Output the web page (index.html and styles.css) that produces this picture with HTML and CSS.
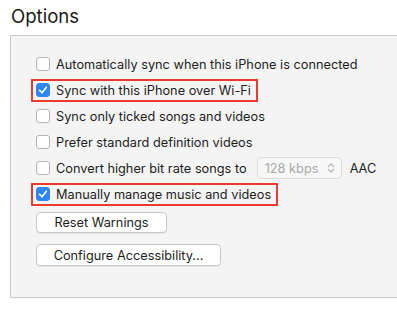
FILE: index.html
```html
<!DOCTYPE html>
<html lang="en">
<head>
    <meta charset="UTF-8">
    <title>Options</title>
    <link rel="stylesheet" href="styles.css">
</head>
<body>

    <h1 class="titulo">Options</h1>

    <div class="painel">
        <div class="linha">
            <label class="opcao"><span class="caixa"></span>Automatically sync when this iPhone is connected</label>
        </div>
        <div class="linha">
            <label class="opcao destaque"><span class="caixa marcada"><svg viewBox="0 0 14 14" width="14" height="14"><path d="M3.6 7.4 L6 9.8 L10.4 4.2" fill="none" stroke="#fff" stroke-width="1.6" stroke-linecap="round" stroke-linejoin="round"/></svg></span>Sync with this iPhone over Wi-Fi</label>
        </div>
        <div class="linha">
            <label class="opcao"><span class="caixa"></span>Sync only ticked songs and videos</label>
        </div>
        <div class="linha">
            <label class="opcao"><span class="caixa"></span>Prefer standard definition videos</label>
        </div>
        <div class="linha">
            <label class="opcao"><span class="caixa"></span>Convert higher bit rate songs to</label>
            <span class="seletor">128 kbps
                <svg class="setas" viewBox="0 0 8 12" width="8" height="12"><path d="M1.5 4.5 L4 2 L6.5 4.5 M1.5 7.5 L4 10 L6.5 7.5" fill="none" stroke="#b5b5b5" stroke-width="1.2" stroke-linecap="round" stroke-linejoin="round"/></svg>
            </span>
            <span class="sufixo">AAC</span>
        </div>
        <div class="linha">
            <label class="opcao destaque"><span class="caixa marcada"><svg viewBox="0 0 14 14" width="14" height="14"><path d="M3.6 7.4 L6 9.8 L10.4 4.2" fill="none" stroke="#fff" stroke-width="1.6" stroke-linecap="round" stroke-linejoin="round"/></svg></span>Manually manage music and videos</label>
        </div>

        <button class="botao botao-reset">Reset Warnings</button>
        <button class="botao botao-acessibilidade">Configure Accessibility...</button>
    </div>

</body>
</html>
```

FILE: styles.css
```css
* {
    margin: 0;
    padding: 0;
    box-sizing: border-box;
}

body {
    font-family: Inter, "Liberation Sans", Arial, sans-serif;
    font-size: 12.75px;
    color: #1e1e1e;
    background-color: #fff;
    overflow: hidden;
}

.titulo {
    font-size: 18.6px;
    font-weight: normal;
    color: #1a1a1a;
    padding: 5px 0 0 11px;
    height: 35px;
}

.painel {
    margin-left: 10px;
    height: 263px;
    background-color: #f4f4f4;
    border: 1px solid #c9c9c9;
    border-right: none;
    padding: 15px 0 0 25px;
}

.linha {
    height: 26px;
    display: flex;
    align-items: center;
}

.opcao {
    display: inline-flex;
    align-items: center;
    gap: 6px;
    height: 23px;
    white-space: nowrap;
}

.destaque {
    margin-left: -5px;
    padding: 0 5px 0 3px;
    border: 2px solid #ea3b2e;
}

.caixa {
    width: 14px;
    height: 14px;
    border: 1px solid #b4b4b4;
    border-radius: 3px;
    background-color: #fff;
    display: inline-block;
    flex-shrink: 0;
}

.caixa.marcada {
    border-color: #2f86f6;
    background-color: #2f86f6;
}

.caixa svg {
    display: block;
    margin: -1px;
}

.seletor {
    margin-left: 10px;
    width: 85px;
    height: 22px;
    border: 1px solid #dcdcdc;
    border-radius: 4px;
    background-color: #f7f7f7;
    color: #a9a9a9;
    display: flex;
    align-items: center;
    justify-content: space-between;
    padding: 0 6px 0 7px;
}

.sufixo {
    margin-left: 8px;
}

.botao {
    display: block;
    font-family: inherit;
    font-size: 12.75px;
    color: #1e1e1e;
    background-color: #fff;
    border: 1px solid #c8c8c8;
    border-radius: 4px;
    box-shadow: 0 1px 0 rgba(0, 0, 0, 0.05);
    height: 21px;
}

.botao-reset {
    width: 131px;
    margin-top: 5px;
}

.botao-acessibilidade {
    width: 185px;
    height: 22px;
    margin-top: 11px;
}
```
